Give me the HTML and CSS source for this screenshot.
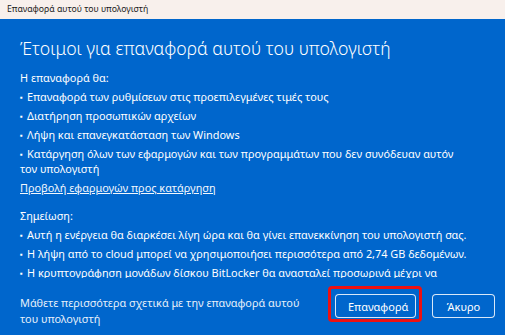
FILE: index.html
```html
<!DOCTYPE html>
<html lang="el">
<head>
<meta charset="utf-8">
<link rel="stylesheet" href="styles.css">
</head>
<body>
<div class="window">
  <div class="titlebar">Επαναφορά αυτού του υπολογιστή</div>
  <div class="panel">
    <div class="content">
      <h1 class="heading">Έτοιμοι για επαναφορά αυτού του υπολογιστή</h1>
      <p class="label">Η επαναφορά θα:</p>
      <ul class="list narrow">
        <li>Επαναφορά των ρυθμίσεων στις προεπιλεγμένες τιμές τους</li>
        <li>Διατήρηση προσωπικών αρχείων</li>
        <li>Λήψη και επανεγκατάσταση των Windows</li>
        <li>Κατάργηση όλων των εφαρμογών και των προγραμμάτων που δεν συνόδευαν αυτόν τον υπολογιστή</li>
      </ul>
      <a class="link" href="#">Προβολή εφαρμογών προς κατάργηση</a>
      <p class="label note">Σημείωση:</p>
      <ul class="list">
        <li>Αυτή η ενέργεια θα διαρκέσει λίγη ώρα και θα γίνει επανεκκίνηση του υπολογιστή σας.</li>
        <li>Η λήψη από το cloud μπορεί να χρησιμοποιήσει περισσότερα από 2,74 GB δεδομένων.</li>
        <li>Η κρυπτογράφηση μονάδων δίσκου BitLocker θα ανασταλεί προσωρινά μέχρι να ολοκληρωθεί η επαναφορά.</li>
      </ul>
    </div>
    <div class="footer">
      <p class="more">Μάθετε περισσότερα σχετικά με την επαναφορά αυτού του υπολογιστή</p>
      <div class="buttons">
        <button class="btn primary">Επαναφορά</button>
        <button class="btn">Άκυρο</button>
      </div>
    </div>
  </div>
</div>
</body>
</html>
```

FILE: styles.css
```css
* { box-sizing: border-box; }
html, body { margin: 0; padding: 0; }
body {
  width: 505px;
  height: 335px;
  overflow: hidden;
  font-family: "Noto Sans", "Open Sans", sans-serif;
  background: #0066cc;
}
.window {
  display: flex;
  flex-direction: column;
  height: 335px;
}
.titlebar {
  height: 19px;
  flex: none;
  background: #f8f0ec;
  color: #1a1a1a;
  font-size: 8.7px;
  line-height: 19px;
  padding-left: 7px;
  padding-bottom: 2px;
}
.panel {
  flex: 1;
  display: flex;
  flex-direction: column;
  background: #0066cc;
  color: #fff;
  min-height: 0;
}
.content {
  flex: 1;
  min-height: 0;
  overflow: hidden;
  padding: 17px 20px 0 20px;
  display: flex;
  flex-direction: column;
  align-items: flex-start;
}
.heading {
  margin: 0 0 10px 0;
  font-size: 17.7px;
  font-weight: 300;
  line-height: 24px;
}
.label {
  margin: 0 0 4px 0;
  font-size: 10.9px;
  line-height: 15px;
}
.note { margin-top: 13px; }
.list {
  list-style: none;
  margin: 0;
  padding: 0;
  font-size: 10.9px;
  line-height: 15px;
  max-width: 465px;
}
.list.narrow { max-width: 440px; }
.list li {
  margin-bottom: 4px;
}
.list li::before {
  content: "▪";
  display: inline-block;
  width: 7px;
  font-size: 8px;
  vertical-align: 1px;
}
.link {
  color: #f2f7fd;
  font-size: 10.9px;
  line-height: 15px;
  text-decoration: underline;
}
.footer {
  flex: none;
  height: 57px;
  display: flex;
  justify-content: space-between;
  align-items: flex-start;
  padding: 17px 10px 0 20px;
}
.more {
  margin: 0;
  font-size: 10.9px;
  line-height: 16px;
  width: 290px;
  color: #e6f0fa;
}
.buttons {
  display: flex;
  gap: 16px;
  margin-top: -1px;
}
.btn {
  position: relative;
  height: 24px;
  border: 1px solid rgba(255,255,255,0.85);
  border-radius: 4px;
  background: #0066cc;
  color: #fff;
  font-family: inherit;
  font-size: 11px;
  padding: 0 12px;
}
.primary { width: 81px; }
.btn:not(.primary) { width: 63px; }
.primary::after {
  content: "";
  position: absolute;
  top: -9px;
  bottom: -5px;
  left: -8px;
  right: -7px;
  border: 3px solid #ee1111;
  border-radius: 4px;
}
```
